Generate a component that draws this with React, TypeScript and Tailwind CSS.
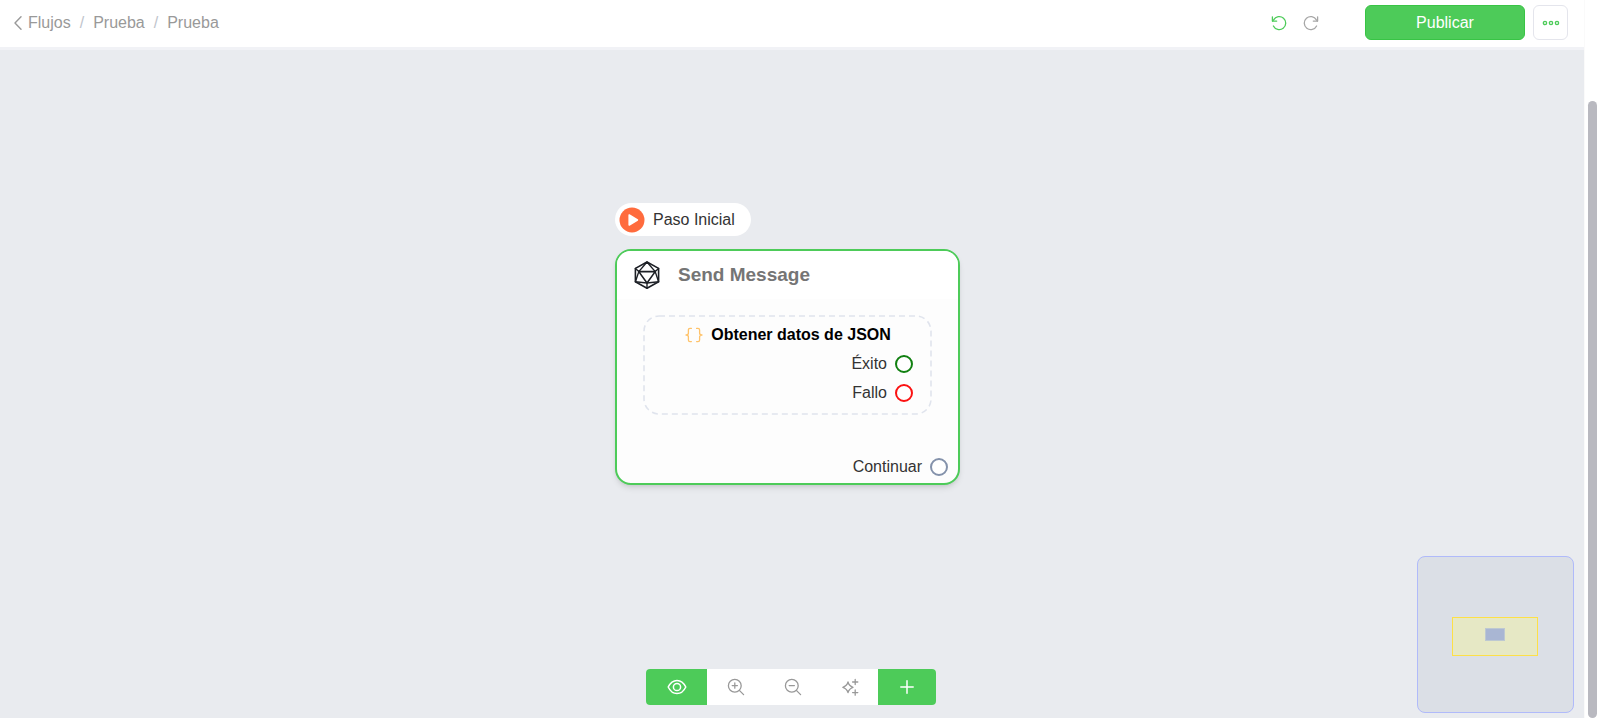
import React from "react";

type IconProps = { className?: string };

const stroke = {
  fill: "none",
  stroke: "currentColor",
  strokeLinecap: "round" as const,
  strokeLinejoin: "round" as const,
  "aria-hidden": true,
};

const ChevronLeft = ({ className }: IconProps) => (
  <svg viewBox="0 0 8 14" className={className} {...stroke} strokeWidth="1.4">
    <path d="M7 .8 1 7l6 6.2" />
  </svg>
);

const Undo = ({ className }: IconProps) => (
  <svg viewBox="0 0 16 16" className={className} {...stroke} strokeWidth="1.3">
    <path d="M2.4 11A6.5 6.500 0 1 0 2.600 4.900L1.600 6" />
    <path d="M1.400 1.800v4.300h4.300" />
  </svg>
);

const Dots = ({ className }: IconProps) => (
  <svg viewBox="0 0 18 6" className={className} {...stroke} strokeWidth="1.4">
    <circle cx="3" cy="3" r="1.6" />
    <circle cx="9" cy="3" r="1.6" />
    <circle cx="15" cy="3" r="1.6" />
  </svg>
);

const Play = ({ className }: IconProps) => (
  <svg viewBox="0 0 26 26" className={className} aria-hidden="true">
    <circle cx="13" cy="13" r="12.5" fill="#ff6b3d" />
    <path d="M10.2 8v10l8.200-5z" fill="#fff" stroke="#fff" strokeWidth="1.6" strokeLinejoin="round" />
  </svg>
);

const Icosahedron = ({ className }: IconProps) => (
  <svg viewBox="0 0 26 28" className={className} {...stroke} strokeWidth="1.6">
    <path d="M13 1 24.600 7.400v13.400L13 27.200 1.400 20.800V7.400z" />
    <path d="M4.800 10.600h16.400L13 22z" />
    <path
      strokeWidth="1.4"
      d="M13 1 4.800 10.600M13 1l8.200 9.600M1.400 7.400l3.400 3.200-3.400 10.200L13 22l11.600-1.200-3.400-10.200 3.400-3.200M13 22v5.200"
    />
  </svg>
);

const Braces = ({ className }: IconProps) => (
  <svg viewBox="0 0 18 16" className={className} {...stroke} strokeWidth="1.3">
    <path d="M6.400 1.400H5Q3.400 1.400 3.400 3v3Q3.400 8 1 8q2.400 0 2.400 2v3q0 1.600 1.600 1.600h1.400" />
    <path d="M11.600 1.400H13q1.600 0 1.600 1.600v3Q14.600 8 17 8q-2.400 0-2.400 2v3q0 1.600-1.600 1.600h-1.400" />
  </svg>
);

const Eye = ({ className }: IconProps) => (
  <svg viewBox="0 0 20 16" className={className} {...stroke} strokeWidth="1.5">
    <path d="M1.200 8Q4.400 1.400 10 1.400T18.800 8q-3.200 6.600-8.800 6.600T1.200 8z" />
    <circle cx="10" cy="8" r="3.6" />
  </svg>
);

const Zoom = ({ className, plus }: IconProps & { plus?: boolean }) => (
  <svg viewBox="0 0 18 18" className={className} {...stroke} strokeWidth="1.3">
    <circle cx="7.8" cy="7.8" r="6.4" />
    <path d="m12.600 12.600 4 4M5.200 7.600h5.200" />
    {plus && <path d="M7.800 5v5.200" />}
  </svg>
);

const Sparkles = ({ className }: IconProps) => (
  <svg viewBox="0 0 18 18" className={className} {...stroke} strokeWidth="1.3">
    <path d="M7 4Q8 8 12 9.300 8 10.600 7 14.600 6 10.600 1.800 9.300 6 8 7 4z" />
    <path d="M14.200 1.400v5.200M11.600 4h5.200M14.200 12v5.200M11.600 14.600h5.200" />
  </svg>
);

const Plus = ({ className }: IconProps) => (
  <svg viewBox="0 0 14 14" className={className} {...stroke} strokeWidth="1.5">
    <path d="M7 .8v12.400M.8 7h12.400" />
  </svg>
);

const Output = ({ label, ring }: { label: string; ring: string }) => (
  <div className="flex items-center justify-end gap-2">
    <span>{label}</span>
    <span className={`size-[18px] rounded-full border-2 bg-white ${ring}`} />
  </div>
);

const toolClass = "flex w-14 grow items-center justify-center text-[#999]";

export default function App() {
  return (
    <div className="flex h-screen overflow-hidden bg-white font-['Liberation_Sans',Arial,sans-serif] text-base text-[#333]">
      <div className="flex min-w-0 grow flex-col">
        <header className="flex h-[50px] shrink-0 items-start justify-between border-b-3 border-[#f1f2f6] pr-4 pl-3.5">
          <nav aria-label="Ruta" className="flex h-[45px] items-center text-[#999]">
            <a href="#flujos" className="flex items-center gap-1.5">
              <ChevronLeft className="h-3.5 w-2" />
              Flujos
            </a>
            <span className="px-[9px] text-[#c0c4cc]">/</span>
            <a href="#carpeta">Prueba</a>
            <span className="px-[9px] text-[#c0c4cc]">/</span>
            <a href="#flujo">Prueba</a>
          </nav>
          <div className="flex items-center pt-[5px]">
            <button type="button" aria-label="Deshacer" className="mr-4 text-[#4dcb59]">
              <Undo className="size-4" />
            </button>
            <button type="button" aria-label="Rehacer" className="mr-[46px] text-[#a6a6a6]">
              <Undo className="size-4 -scale-x-100" />
            </button>
            <button
              type="button"
              className="mr-2 h-[35px] w-40 rounded-md border border-[#38c445] bg-[#4dcb59] font-medium text-white"
            >
              Publicar
            </button>
            <button
              type="button"
              aria-label="Más opciones"
              className="flex h-[35px] w-[35px] items-center justify-center rounded-md border border-[#e4e5ec] text-[#4dcb59]"
            >
              <Dots className="h-1.5 w-[18px]" />
            </button>
          </div>
        </header>

        <main className="relative grow bg-[#e9ebef]">
          <div className="absolute top-[153px] left-[615px] flex w-[345px] flex-col items-start gap-[13px]">
            <div className="flex h-[33px] items-center gap-2 rounded-full bg-white pr-4 pl-1">
              <Play className="size-[26px]" />
              <span>Paso Inicial</span>
            </div>
            <section className="w-full overflow-hidden rounded-2xl border-2 border-[#4dcb59] bg-[#fdfdfd] shadow-md">
              <div className="flex h-12 items-center gap-[18px] bg-white pl-[17px]">
                <Icosahedron className="h-7 w-[26px] text-[#1d2026]" />
                <h2 className="text-[19px] font-bold text-[#757575]">Send Message</h2>
              </div>
              <div className="px-[26px] pt-4">
                <div className="relative h-[100px] pt-2 pr-[19px]">
                  <svg className="absolute inset-0 h-full w-full" aria-hidden="true">
                    <rect
                      x="1"
                      y="1"
                      rx="15"
                      fill="none"
                      stroke="#e0e4ed"
                      strokeWidth="1.6"
                      strokeDasharray="6 4"
                      className="h-[98px] w-[calc(100%-2px)]"
                    />
                  </svg>
                  <div className="flex flex-col gap-[5px]">
                    <div className="flex items-center justify-center gap-2 pl-5 text-black">
                      <Braces className="h-4 w-[18px] text-[#ffc36b]" />
                      <h3 className="font-bold">Obtener datos de JSON</h3>
                    </div>
                    <Output label="Éxito" ring="border-[#118011]" />
                    <Output label="Fallo" ring="border-[#fb1212]" />
                  </div>
                </div>
              </div>
              <div className="pt-10 pr-2.5 pb-1">
                <Output label="Continuar" ring="border-[#8492ab]" />
              </div>
            </section>
          </div>

          <div
            role="toolbar"
            aria-label="Herramientas"
            className="absolute inset-x-0 bottom-[13px] mx-auto flex h-9 w-[290px] -translate-x-px overflow-hidden rounded bg-white"
          >
            <button type="button" aria-label="Vista previa" className="flex w-[61px] items-center justify-center bg-[#4dcb59] text-white">
              <Eye className="h-4 w-5" />
            </button>
            <button type="button" aria-label="Acercar" className={toolClass}>
              <Zoom plus className="size-[18px]" />
            </button>
            <button type="button" aria-label="Alejar" className={toolClass}>
              <Zoom className="size-[18px]" />
            </button>
            <button type="button" aria-label="Ordenar" className={toolClass}>
              <Sparkles className="size-[18px]" />
            </button>
            <button type="button" aria-label="Añadir" className="flex w-[58px] items-center justify-center bg-[#4dcb59] text-white">
              <Plus className="size-3.5" />
            </button>
          </div>

          <div className="absolute right-2.5 bottom-[5px] size-[157px] rounded-lg border border-[#b0bafa] bg-[#dbdfe6]">
            <div className="absolute top-[60px] left-[34px] h-[39px] w-[86px] border border-[#fde047] bg-[#e6e8c5]">
              <div className="absolute top-2.5 left-8 h-[13px] w-5 border border-[#bdc8d2] bg-[#a9b6d3]" />
            </div>
          </div>
        </main>
      </div>
      <div className="flex w-4 shrink-0 flex-col border-l border-[#fafafa] pt-[101px]">
        <div className="ml-[3px] w-[9px] grow rounded-full bg-[#b9b9c0]" />
      </div>
    </div>
  );
}
